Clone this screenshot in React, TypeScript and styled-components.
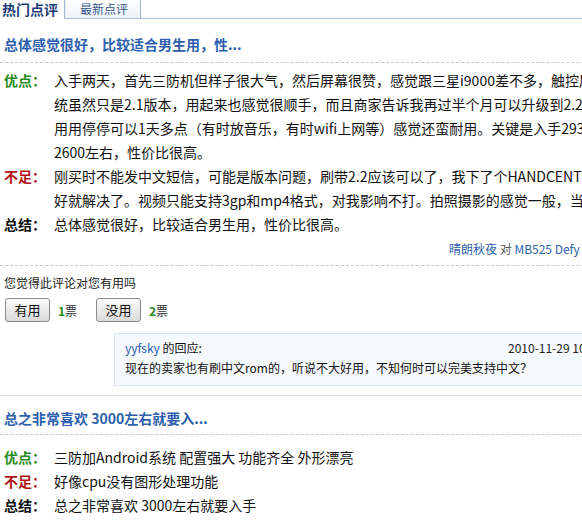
import React from "react";
import styled, { createGlobalStyle } from "styled-components";

const GlobalStyle = createGlobalStyle`
  html, body { margin: 0; padding: 0; background: #fff; overflow: hidden; }
  body {
    font-family: "Noto Sans CJK SC", "Noto Sans", sans-serif;
    color: #111;
  }
`;

const Page = styled.div`
  width: 582px;
  height: 520px;
  overflow: hidden;
`;

const Content = styled.div`
  width: 780px;
`;

const TabBar = styled.div`
  display: flex;
  height: 19px;
`;

const ActiveTab = styled.div`
  width: 64px;
  padding-left: 2px;
  box-sizing: border-box;
  font-size: 14px;
  font-weight: bold;
  line-height: 18px;
  color: #1c3d7a;
  background: #fff;
`;

const Tab = styled.div`
  width: 77px;
  box-sizing: border-box;
  padding-left: 15px;
  border-left: 1px solid #a3b8d6;
  border-right: 1px solid #a3b8d6;
  border-bottom: 1px solid #a9c0de;
  box-shadow: inset 1px 0 0 #e2eaf5;
  background: linear-gradient(#ffffff, #edf2f9);
  font-size: 12px;
  line-height: 18px;
  color: #34568f;
`;

const TabFill = styled.div`
  flex: 1;
  border-bottom: 1px solid #a9c0de;
`;

const Title = styled.h2<{ $top: number; $bottom: number }>`
  margin: ${(p) => p.$top}px 0 0;
  padding: 0 0 ${(p) => p.$bottom}px 4px;
  font-size: 14px;
  font-weight: bold;
  line-height: 24px;
  color: #2d5fae;
  border-bottom: 1px dashed #c8c8c8;
`;

const Rows = styled.div<{ $top: number }>`
  padding: ${(p) => p.$top}px 0 0 4px;
`;

const Row = styled.div`
  display: grid;
  grid-template-columns: 50px 1fr;
  font-size: 14px;
  line-height: 24px;
`;

type Tone = "good" | "bad" | "sum";
const toneColor: Record<Tone, string> = {
  good: "#2a8a1c",
  bad: "#b01414",
  sum: "#111",
};

const Label = styled.span<{ $tone: Tone }>`
  font-weight: bold;
  color: ${(p) => toneColor[p.$tone]};
`;

const Lines = styled.div`
  white-space: nowrap;
`;

const Line = styled.div``;

const AuthorLine = styled.div`
  margin-top: 4px;
  padding: 0 0 7px 449px;
  font-size: 12px;
  line-height: 18px;
  border-bottom: 1px dashed #c8c8c8;
  white-space: nowrap;
  color: #555;
`;

const BlueText = styled.span`
  color: #2d5fae;
`;

const Question = styled.div`
  margin-top: 8px;
  padding-left: 4px;
  font-size: 12px;
  line-height: 18px;
  color: #222;
`;

const Votes = styled.div`
  margin-top: 6px;
  padding-left: 5px;
  display: grid;
  grid-template-columns: repeat(2, 91px);
`;

const VoteGroup = styled.div`
  display: flex;
  align-items: center;
  gap: 8px;
`;

const VoteButton = styled.button`
  width: 45px;
  height: 24px;
  padding: 0;
  border: 1px solid #8a8a8a;
  border-radius: 3px;
  background: linear-gradient(#fbfbfb, #dadada);
  font-family: inherit;
  font-size: 13px;
  color: #111;
  line-height: 20px;
`;

const VoteCount = styled.span`
  font-size: 12px;
  color: #333;
`;

const VoteNum = styled.b`
  color: #2a8a1c;
`;

const ReplyBox = styled.div`
  margin: 11px 0 0 114px;
  padding: 4px 0 7px 10px;
  border: 1px solid #dce5f0;
  background: #f6f9fd;
  font-size: 12px;
  line-height: 20px;
  white-space: nowrap;
`;

const ReplyHead = styled.div`
  display: grid;
  grid-template-columns: 383px auto;
`;

const ReplyDate = styled.span`
  color: #222;
`;

const Divider = styled.div`
  margin-top: 9px;
  border-top: 1px solid #d3ddea;
`;

type Review = {
  title: string;
  good: string[];
  bad: string[];
  sum: string[];
};

const first: Review = {
  title: "总体感觉很好，比较适合男生用，性...",
  good: [
    "入手两天，首先三防机但样子很大气，然后屏幕很赞，感觉跟三星i9000差不多，触控屏幕也很灵敏，系",
    "统虽然只是2.1版本，用起来也感觉很顺手，而且商家告诉我再过半个月可以升级到2.2，电池也还行，",
    "用用停停可以1天多点（有时放音乐，有时wifi上网等）感觉还蛮耐用。关键是入手2930，现在",
    "2600左右，性价比很高。",
  ],
  bad: [
    "刚买时不能发中文短信，可能是版本问题，刷带2.2应该可以了，我下了个HANDCENT SMS装",
    "好就解决了。视频只能支持3gp和mp4格式，对我影响不打。拍照摄影的感觉一般，当然也够用了。",
  ],
  sum: ["总体感觉很好，比较适合男生用，性价比很高。"],
};

const second: Review = {
  title: "总之非常喜欢 3000左右就要入...",
  good: ["三防加Android系统 配置强大 功能齐全 外形漂亮"],
  bad: ["好像cpu没有图形处理功能"],
  sum: ["总之非常喜欢 3000左右就要入手"],
};

function ReviewRows({ review, top }: { review: Review; top: number }) {
  const parts: [Tone, string, string[]][] = [
    ["good", "优点：", review.good],
    ["bad", "不足：", review.bad],
    ["sum", "总结：", review.sum],
  ];
  return (
    <Rows $top={top}>
      {parts.map(([tone, label, lines]) => (
        <Row key={tone}>
          <Label $tone={tone}>{label}</Label>
          <Lines>
            {lines.map((l, i) => (
              <Line key={i}>{l}</Line>
            ))}
          </Lines>
        </Row>
      ))}
    </Rows>
  );
}

export default function App() {
  return (
    <Page>
      <GlobalStyle />
      <Content>
        <TabBar>
          <ActiveTab>热门点评</ActiveTab>
          <Tab>最新点评</Tab>
          <TabFill />
        </TabBar>

        <Title $top={13} $bottom={6}>{first.title}</Title>
        <ReviewRows review={first} top={5} />
        <AuthorLine>
          <BlueText>晴朗秋夜</BlueText> 对 <BlueText>MB525 Defy</BlueText> 的点评
        </AuthorLine>

        <Question>您觉得此评论对您有用吗</Question>
        <Votes>
          <VoteGroup>
            <VoteButton>有用</VoteButton>
            <VoteCount>
              <VoteNum>1</VoteNum>票
            </VoteCount>
          </VoteGroup>
          <VoteGroup>
            <VoteButton>没用</VoteButton>
            <VoteCount>
              <VoteNum>2</VoteNum>票
            </VoteCount>
          </VoteGroup>
        </Votes>

        <ReplyBox>
          <ReplyHead>
            <span>
              <BlueText>yyfsky</BlueText> 的回应:
            </span>
            <ReplyDate>2010-11-29 10:23</ReplyDate>
          </ReplyHead>
          <div>现在的卖家也有刷中文rom的，听说不大好用，不知何时可以完美支持中文？</div>
        </ReplyBox>

        <Divider />

        <Title $top={10} $bottom={4}>{second.title}</Title>
        <ReviewRows review={second} top={10} />
      </Content>
    </Page>
  );
}
